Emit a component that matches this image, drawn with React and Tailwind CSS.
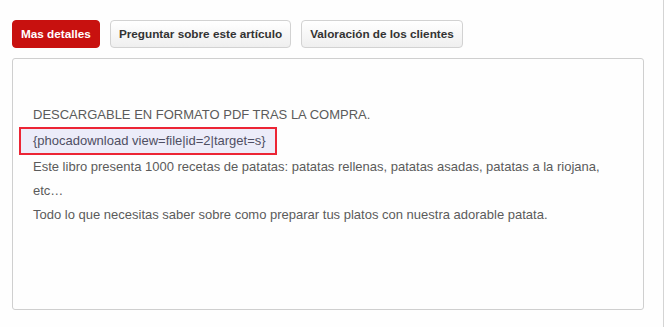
import React, { useState } from "react";

const tabs = ["Mas detalles", "Preguntar sobre este artículo", "Valoración de los clientes"];

export default function App() {
  const [active, setActive] = useState(0);

  return (
    <div
      className="w-[664px] h-[327px] bg-[#fefefe] border-r border-[#d4d4d4]"
      style={{ fontFamily: '"Liberation Sans", Arial, sans-serif' }}
    >
      <div className="pl-3 pt-5">
        <div className="flex gap-[10px]">
          {tabs.map((t, i) => (
            <button
              key={t}
              onClick={() => setActive(i)}
              className={
                i === active
                  ? "h-[28px] px-2 rounded-[4px] bg-[#c8110f] border border-[#c8110f] text-white text-[11.75px] font-bold"
                  : "h-[28px] px-2 rounded-[4px] bg-gradient-to-b from-white to-[#efefef] border border-[#d2d2d2] text-[#333] text-[11.75px] font-bold"
              }
            >
              {t}
            </button>
          ))}
        </div>

        <div className="mt-[10px] w-[632px] h-[252px] border border-[#cfcfcf] rounded-[3px] bg-[#fefefe] pl-[6px] pr-4 pt-[44px] text-[13px] leading-[24px] text-[#5b5b5b]">
          <p className="pl-[14px]">DESCARGABLE EN FORMATO PDF TRAS LA COMPRA.</p>
          <p className="w-[258px] border-2 border-[#ec2535] bg-[#ececf9] pl-3 text-[#4f4f63]">
            {"{phocadownload view=file|id=2|target=s}"}
          </p>
          <p className="pl-[14px]">
            Este libro presenta 1000 recetas de patatas: patatas rellenas, patatas asadas, patatas a la riojana,
            etc…
          </p>
          <p className="pl-[14px]">
            Todo lo que necesitas saber sobre como preparar tus platos con nuestra adorable patata.
          </p>
        </div>
      </div>
    </div>
  );
}
